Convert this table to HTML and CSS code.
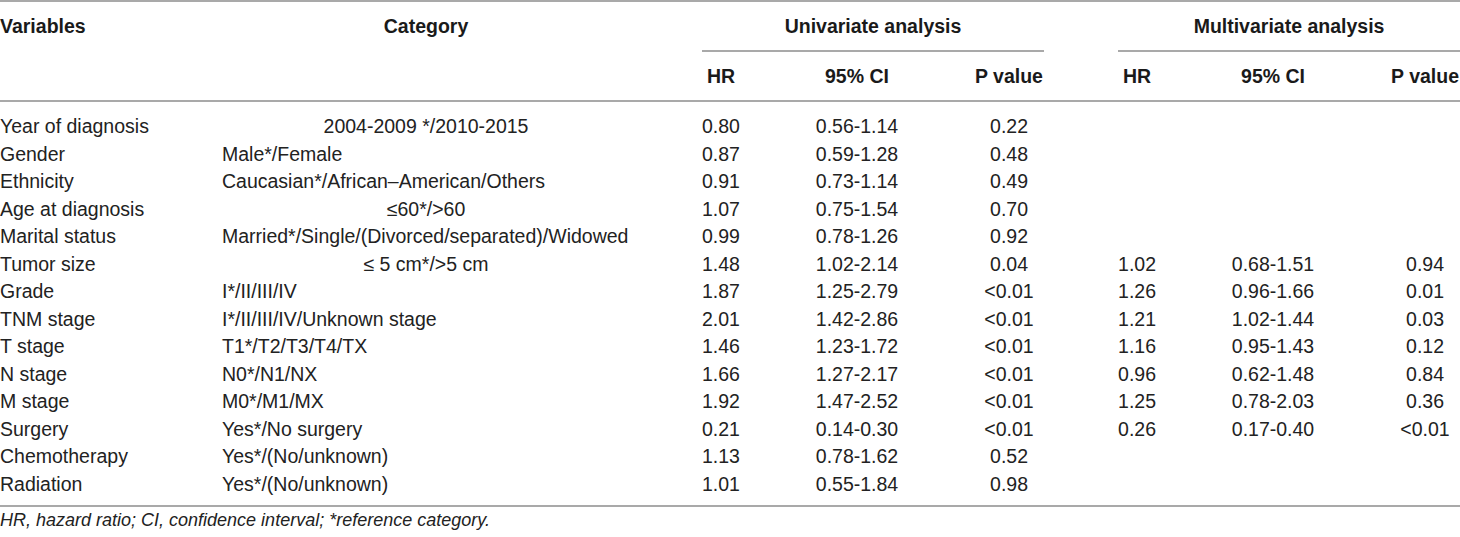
FILE: index.html
```html
<html>
<head>
<title>Cox regression analysis</title>
<link rel="stylesheet" href="styles.css">
</head>
<body>
<table class="results">
<colgroup>
<col class="c-var">
<col class="c-cat">
<col class="c-pad">
<col class="c-hr">
<col class="c-ci">
<col class="c-p">
<col class="c-gap">
<col class="c-hr">
<col class="c-ci">
<col class="c-p">
</colgroup>
<thead>
<tr class="top">
<th rowspan="2" class="left span2">Variables</th>
<th rowspan="2" class="span2">Category</th>
<th rowspan="2" class="span2"></th>
<th colspan="3" class="group">Univariate analysis</th>
<th rowspan="2" class="span2"></th>
<th colspan="3" class="group">Multivariate analysis</th>
</tr>
<tr class="sub">
<th>HR</th>
<th>95% CI</th>
<th>P value</th>
<th>HR</th>
<th>95% CI</th>
<th>P value</th>
</tr>
</thead>
<tbody>
<tr class="first">
<td class="left">Year of diagnosis</td>
<td>2004-2009 */2010-2015</td>
<td></td><td>0.80</td><td>0.56-1.14</td><td>0.22</td>
<td></td><td></td><td></td><td></td>
</tr>
<tr>
<td class="left">Gender</td>
<td class="left">Male*/Female</td>
<td></td><td>0.87</td><td>0.59-1.28</td><td>0.48</td>
<td></td><td></td><td></td><td></td>
</tr>
<tr>
<td class="left">Ethnicity</td>
<td class="left">Caucasian*/African–American/Others</td>
<td></td><td>0.91</td><td>0.73-1.14</td><td>0.49</td>
<td></td><td></td><td></td><td></td>
</tr>
<tr>
<td class="left">Age at diagnosis</td>
<td>≤60*/&gt;60</td>
<td></td><td>1.07</td><td>0.75-1.54</td><td>0.70</td>
<td></td><td></td><td></td><td></td>
</tr>
<tr>
<td class="left">Marital status</td>
<td class="left">Married*/Single/(Divorced/separated)/Widowed</td>
<td></td><td>0.99</td><td>0.78-1.26</td><td>0.92</td>
<td></td><td></td><td></td><td></td>
</tr>
<tr>
<td class="left">Tumor size</td>
<td>≤ 5 cm*/&gt;5 cm</td>
<td></td><td>1.48</td><td>1.02-2.14</td><td>0.04</td>
<td></td><td>1.02</td><td>0.68-1.51</td><td>0.94</td>
</tr>
<tr>
<td class="left">Grade</td>
<td class="left">I*/II/III/IV</td>
<td></td><td>1.87</td><td>1.25-2.79</td><td>&lt;0.01</td>
<td></td><td>1.26</td><td>0.96-1.66</td><td>0.01</td>
</tr>
<tr>
<td class="left">TNM stage</td>
<td class="left">I*/II/III/IV/Unknown stage</td>
<td></td><td>2.01</td><td>1.42-2.86</td><td>&lt;0.01</td>
<td></td><td>1.21</td><td>1.02-1.44</td><td>0.03</td>
</tr>
<tr>
<td class="left">T stage</td>
<td class="left">T1*/T2/T3/T4/TX</td>
<td></td><td>1.46</td><td>1.23-1.72</td><td>&lt;0.01</td>
<td></td><td>1.16</td><td>0.95-1.43</td><td>0.12</td>
</tr>
<tr>
<td class="left">N stage</td>
<td class="left">N0*/N1/NX</td>
<td></td><td>1.66</td><td>1.27-2.17</td><td>&lt;0.01</td>
<td></td><td>0.96</td><td>0.62-1.48</td><td>0.84</td>
</tr>
<tr>
<td class="left">M stage</td>
<td class="left">M0*/M1/MX</td>
<td></td><td>1.92</td><td>1.47-2.52</td><td>&lt;0.01</td>
<td></td><td>1.25</td><td>0.78-2.03</td><td>0.36</td>
</tr>
<tr>
<td class="left">Surgery</td>
<td class="left">Yes*/No surgery</td>
<td></td><td>0.21</td><td>0.14-0.30</td><td>&lt;0.01</td>
<td></td><td>0.26</td><td>0.17-0.40</td><td>&lt;0.01</td>
</tr>
<tr>
<td class="left">Chemotherapy</td>
<td class="left">Yes*/(No/unknown)</td>
<td></td><td>1.13</td><td>0.78-1.62</td><td>0.52</td>
<td></td><td></td><td></td><td></td>
</tr>
<tr class="last">
<td class="left">Radiation</td>
<td class="left">Yes*/(No/unknown)</td>
<td></td><td>1.01</td><td>0.55-1.84</td><td>0.98</td>
<td></td><td></td><td></td><td></td>
</tr>
</tbody>
</table>
<p class="note">HR, hazard ratio; CI, confidence interval; *reference category.</p>
</body>
</html>
```

FILE: styles.css
```css
body {
    margin: 0;
    padding: 0;
    background: white;
    color: #222;
    font-family: "Liberation Sans", Arial, sans-serif;
}

.results {
    width: 1460px;
    table-layout: fixed;
    border-collapse: separate;
    border-spacing: 0;
    font-size: 19.5px;
}

.c-var { width: 222px; }
.c-cat { width: 408px; }
.c-pad { width: 72px; }
.c-hr { width: 38px; }
.c-ci { width: 234px; }
.c-p { width: 70px; }
.c-gap { width: 74px; }

th, td {
    padding: 0;
    text-align: center;
    white-space: nowrap;
}

th {
    font-weight: bold;
    color: #1a1a1a;
    line-height: 48px;
}

.top th {
    border-top: 2px solid #a9a9a9;
    vertical-align: top;
}

.group {
    border-bottom: 2px solid #a9a9a9;
}

.span2,
.sub th {
    border-bottom: 2px solid #a9a9a9;
}

td {
    height: 27.5px;
    line-height: 27.5px;
}

.left {
    text-align: left;
}

.first td {
    padding-top: 11px;
}

.last td {
    padding-bottom: 7px;
    border-bottom: 2px solid #a9a9a9;
}

.note {
    margin: 2px 0 0 0;
    font-size: 18px;
    font-style: italic;
    line-height: 22px;
    color: #222;
}
```
